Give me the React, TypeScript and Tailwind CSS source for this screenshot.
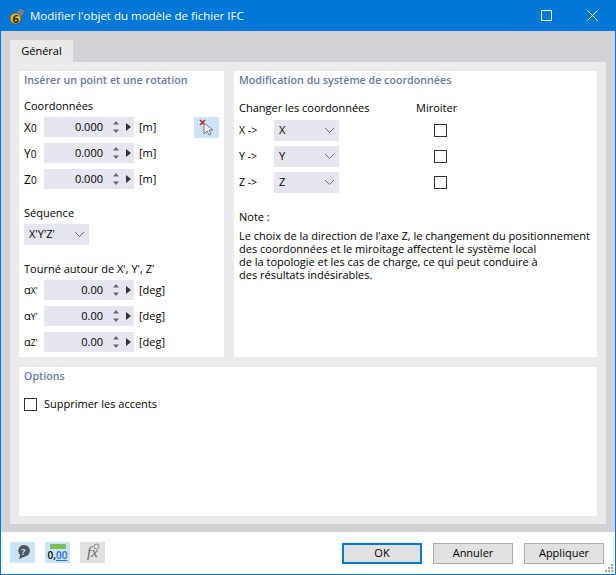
import React from "react";

const font = { fontFamily: '"Open Sans","Noto Sans",sans-serif' };

function Chevron() {
  return (
    <svg width="11" height="7" viewBox="0 0 11 7" fill="none" stroke="#6f6f78" strokeWidth="1">
      <path d="M1 1l4.5 4.5L10 1" />
    </svg>
  );
}

function Spin({ value, unit, label, sub }: { value: string; unit: string; label: string; sub: string }) {
  return (
    <div className="flex items-center h-[20px] mb-[6px]">
      <div className="w-[20px] pt-[1px] text-[11px] text-black flex items-baseline">
        <span className={sub === "0" ? "text-[12px]" : "text-[11px]"}>{label}</span>
        <span className={sub === "0" ? "text-[10px]" : "text-[8.5px]"}>{sub}</span>
      </div>
      <div className="w-[90px] h-[20px] bg-[#e6e6f0] flex items-center">
        <span className="w-[59px] pt-[1px] text-right text-[11px] text-black">{value}</span>
        <svg width="8" height="14" viewBox="0 0 8 14" className="ml-[9px]" fill="#666">
          <path d="M4 1l3 3.5H1zM4 13L1 9.5h6z" />
        </svg>
        <svg width="5" height="8" viewBox="0 0 5 8" className="ml-[6px]" fill="#333">
          <path d="M0 0l5 4-5 4z" />
        </svg>
      </div>
      <span className="ml-[5px] text-[11px] text-black">{unit}</span>
    </div>
  );
}

function Select({ value, w }: { value: string; w: string }) {
  return (
    <div className={`${w} h-[21px] bg-[#e6e6f0] flex items-center justify-between pl-[5px] pr-[4px] text-[11px] text-black`}>
      <span>{value}</span>
      <Chevron />
    </div>
  );
}

function Box() {
  return <div className="w-[13px] h-[13px] border border-[#333] bg-white" />;
}

function MapRow({ a, b }: { a: string; b: string }) {
  return (
    <div className="flex items-center h-[21px] mb-[5px]">
      <span className="w-[35px] text-[10.5px] text-black">{a} -&gt;</span>
      <Select value={b} w="w-[65px]" />
      <div className="ml-[95px]">
        <Box />
      </div>
    </div>
  );
}

const note = [
  "Le choix de la direction de l'axe Z, le changement du positionnement",
  "des coordonnées et le miroitage affectent le système local",
  "de la topologie et les cas de charge, ce qui peut conduire à",
  "des résultats indésirables.",
];

export default function App() {
  return (
    <div className="w-[616px] h-[575px] flex flex-col bg-white border border-[#0078d7] border-t-0 overflow-hidden relative" style={font}>
      <div className="h-[31px] shrink-0 bg-[#0078d7] flex items-center text-white">
        <svg width="18" height="18" viewBox="0 0 18 18" className="ml-[7px]">
          <path d="M7 6l6-5 4 3-3 6z" fill="#6d7f9b" stroke="#39506f" strokeWidth=".6" />
          <circle cx="7.5" cy="11.5" r="5.5" fill="#e7bd2e" stroke="#4d3c0a" strokeWidth=".7" />
          <text x="4.6" y="15.5" fontSize="11" fontWeight="700" fill="#2a2208" style={font}>6</text>
        </svg>
        <span className="ml-[4px] text-[11.5px] whitespace-nowrap">Modifier l'objet du modèle de fichier IFC</span>
        <div className="ml-auto flex items-center">
          <svg width="11" height="11" viewBox="0 0 11 11" fill="none" stroke="#fff" className="mr-[35px]">
            <rect x=".5" y=".5" width="10" height="10" />
          </svg>
          <svg width="11" height="11" viewBox="0 0 11 11" fill="none" stroke="#fff" className="mr-[17px]">
            <path d="M.5.5l10 10M10.5.5l-10 10" />
          </svg>
        </div>
      </div>

      <div className="h-[501px] shrink-0 bg-[#d2d1d5] pl-[9px] pr-[9px] pt-[9px] flex flex-col">
        <div className="h-[22px] w-[63px] bg-[#e9e9e9] text-[11px] text-black flex items-center justify-center">Général</div>
        <div className="h-[462px] bg-[#ebebeb] px-[9px] pt-[9px] flex flex-col gap-[10px]">
          <div className="flex gap-[10px] h-[286px]">
            <div className="w-[205px] bg-white pl-[5px] pt-[1px]">
              <div className="text-[10.7px] font-semibold text-[#6a7aa0] leading-[16px]">Insérer un point et une rotation</div>
              <div className="text-[11px] text-black mt-[10px] leading-[16px] mb-[3px]">Coordonnées</div>
              <div className="relative">
                <Spin label="X" sub="0" value="0.000" unit="[m]" />
                <Spin label="Y" sub="0" value="0.000" unit="[m]" />
                <Spin label="Z" sub="0" value="0.000" unit="[m]" />
                <div className="absolute left-[170px] top-0 w-[25px] h-[21px] bg-[#cce4f7] flex items-center justify-center">
                  <svg width="16" height="18" viewBox="0 0 16 18">
                    <path d="M1 1l5 5M6 1L1 6" stroke="#d0142c" strokeWidth="1.5" />
                    <path d="M5 4v11l3-3 2 4 2-1-2-4h4z" fill="#f4f4f4" stroke="#777" strokeWidth="1" />
                  </svg>
                </div>
              </div>
              <div className="text-[11px] text-black mt-[16px] leading-[16px] mb-[3px]">Séquence</div>
              <Select value="X'Y'Z'" w="w-[65px]" />
              <div className="text-[11px] text-black mt-[16px] leading-[16px] mb-[3px]">Tourné autour de X', Y', Z'</div>
              <Spin label="α" sub="X'" value="0.00" unit="[deg]" />
              <Spin label="α" sub="Y'" value="0.00" unit="[deg]" />
              <Spin label="α" sub="Z'" value="0.00" unit="[deg]" />
            </div>
            <div className="w-[363px] bg-white pl-[5px] pt-[1px]">
              <div className="text-[10.7px] font-semibold text-[#6a7aa0] leading-[16px]">Modification du système de coordonnées</div>
              <div className="flex text-[11px] text-black mt-[12px] leading-[16px] mb-[4px]">
                <span className="w-[177px]">Changer les coordonnées</span>
                <span>Miroiter</span>
              </div>
              <MapRow a="X" b="X" />
              <MapRow a="Y" b="Y" />
              <MapRow a="Z" b="Z" />
              <div className="text-[11px] text-black mt-[16px] leading-[16px]">Note :</div>
              <div className="text-[11px] text-black mt-[4px] whitespace-nowrap">
                {note.map((line) => (
                  <div key={line} className="h-[13px] leading-[13px]">{line}</div>
                ))}
              </div>
            </div>
          </div>
          <div className="h-[149px] bg-white pl-[5px] pt-[1px]">
            <div className="text-[10.7px] font-semibold text-[#6a7aa0] leading-[16px]">Options</div>
            <div className="flex items-center h-[15px] mt-[13px] text-[11px] text-black">
              <Box />
              <span className="ml-[7px]">Supprimer les accents</span>
            </div>
          </div>
        </div>
      </div>

      <div className="flex-1 flex items-center pl-[9px] pr-[11px]">
        <div className="w-[25px] h-[21px] mb-[2px] bg-[#cce4f7] flex items-center justify-center">
          <svg width="16" height="16" viewBox="0 0 16 16">
            <path d="M9 1a6 5.8 0 0 1 1 11.5L4 15l1.2-4A6 5.8 0 0 1 9 1z" fill="#4d5561" />
            <text x="6.2" y="10.5" fontSize="9" fontWeight="700" fill="#cce4f7" style={font}>?</text>
          </svg>
        </div>
        <div className="w-[25px] h-[21px] mb-[2px] bg-[#cce4f7] ml-[10px] flex flex-col items-center pt-[2px]">
          <div className="w-[16px] h-[5px] bg-[#7cc05a]" />
          <div className="text-[10px] leading-[12px] font-semibold text-black">0,<span className="text-[#2a6fd6] underline">00</span></div>
        </div>
        <div className="relative w-[25px] h-[21px] mb-[2px] bg-[#e1e1e1] ml-[10px] flex items-center justify-center">
          <span className="text-[15px] italic text-[#666]" style={{ fontFamily: '"Liberation Serif",serif' }}>fx</span>
          <svg width="7" height="7" viewBox="0 0 7 7" className="absolute right-[5px] top-[1px]" fill="none" stroke="#888">
            <circle cx="3.5" cy="3.5" r="2.5" />
          </svg>
        </div>
        <div className="ml-auto flex gap-[11px] text-[11px] text-black">
          <button className="w-[80px] h-[21px] bg-[#e1e1e1] border-2 border-[#0078d7] flex items-center justify-center">OK</button>
          <button className="w-[80px] h-[21px] bg-[#e1e1e1] border border-[#adadad] flex items-center justify-center">Annuler</button>
          <button className="w-[80px] h-[21px] bg-[#e1e1e1] border border-[#adadad] flex items-center justify-center">Appliquer</button>
        </div>
      </div>
      <svg width="10" height="10" viewBox="0 0 10 10" className="absolute right-[1px] bottom-[1px]" fill="#a0a0a0">
        <rect x="7" y="1" width="2" height="2" />
        <rect x="4" y="4" width="2" height="2" />
        <rect x="7" y="4" width="2" height="2" />
        <rect x="1" y="7" width="2" height="2" />
        <rect x="4" y="7" width="2" height="2" />
        <rect x="7" y="7" width="2" height="2" />
      </svg>
    </div>
  );
}
